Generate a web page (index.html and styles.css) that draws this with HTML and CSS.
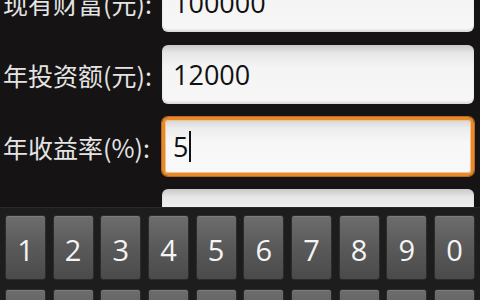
FILE: index.html
```html
<!DOCTYPE html>
<html lang="zh-CN">
<head>
<meta charset="utf-8">
<link rel="stylesheet" href="styles.css">
</head>
<body>
<div class="screen">
  <div class="form">
    <div class="form-inner">
      <div class="row">
        <span class="label">现有财富(元):</span>
        <div class="field"><span class="value">100000</span></div>
      </div>
      <div class="row">
        <span class="label">年投资额(元):</span>
        <div class="field"><span class="value">12000</span></div>
      </div>
      <div class="row">
        <span class="label">年收益率(%):</span>
        <div class="field focused"><span class="value">5</span><span class="caret"></span></div>
      </div>
      <div class="row">
        <span class="label"></span>
        <div class="field"><span class="value"></span></div>
      </div>
    </div>
  </div>
  <div class="keyboard">
    <div class="keys">
      <div class="key">1</div><div class="key">2</div><div class="key">3</div><div class="key">4</div><div class="key">5</div>
      <div class="key">6</div><div class="key">7</div><div class="key">8</div><div class="key">9</div><div class="key">0</div>
      <div class="key"></div><div class="key"></div><div class="key"></div><div class="key"></div><div class="key"></div>
      <div class="key"></div><div class="key"></div><div class="key"></div><div class="key"></div><div class="key"></div>
    </div>
  </div>
</div>
</body>
</html>
```

FILE: styles.css
```css
* { box-sizing: border-box; }
html, body {
  margin: 0;
  padding: 0;
  width: 480px;
  height: 300px;
  overflow: hidden;
  background: #151313;
}
.screen {
  width: 480px;
  height: 300px;
  display: flex;
  flex-direction: column;
  overflow: hidden;
}
.form {
  height: 207px;
  overflow: hidden;
  flex: none;
}
.form-inner {
  margin-top: -27px;
  display: flex;
  flex-direction: column;
  gap: 13px;
}
.row {
  display: flex;
  align-items: center;
  height: 59px;
}
.label {
  width: 162px;
  padding-left: 3px;
  font-family: "Noto Sans CJK SC", "Open Sans", sans-serif;
  font-size: 25px;
  color: #e4e4e4;
  white-space: nowrap;
}
.field {
  width: 312px;
  height: 59px;
  border-radius: 6px;
  background: linear-gradient(to bottom, #c9c9c9 0px, #e6e6e6 8px, #f4f4f4 22px, #f7f7f7 100%);
  box-shadow: inset 0 -2px 2px rgba(0,0,0,0.12);
  display: flex;
  align-items: center;
  padding-left: 11px;
}
.field.focused {
  border: 3px solid #e88a2c;
  box-shadow: 0 0 0 1px #b86a20, inset 0 0 0 1px #f6c487;
  padding-left: 8px;
  background: linear-gradient(to bottom, #d6d6d6 0px, #ececec 8px, #f7f7f7 22px, #f9f9f9 100%);
}
.value {
  font-family: "Open Sans", "DejaVu Sans", sans-serif;
  font-size: 27px;
  color: #111;
  line-height: 1;
}
.caret {
  display: inline-block;
  width: 2px;
  height: 31px;
  background: #111;
  margin-left: 1px;
}
.keyboard {
  flex: 1;
  min-height: 0;
  overflow: hidden;
  background: #1d1d1d;
  border-top: 1px solid #2a2a2a;
  padding: 7px 5px 0 5px;
}
.keys {
  display: grid;
  grid-template-columns: repeat(10, 1fr);
  column-gap: 6.7px;
  row-gap: 9px;
}
.key {
  height: 65px;
  border-radius: 3px;
  border: 1px solid #2c2c2c;
  background: linear-gradient(to bottom, #6d6d6d 0%, #5b5b5b 45%, #4a4a4a 100%);
  box-shadow: inset 0 1px 0 #7c7c7c;
  color: #f4f4f4;
  font-family: "Open Sans", "DejaVu Sans", sans-serif;
  font-size: 29px;
  line-height: 1;
  padding-top: 4px;
  display: flex;
  align-items: center;
  justify-content: center;
}
```
